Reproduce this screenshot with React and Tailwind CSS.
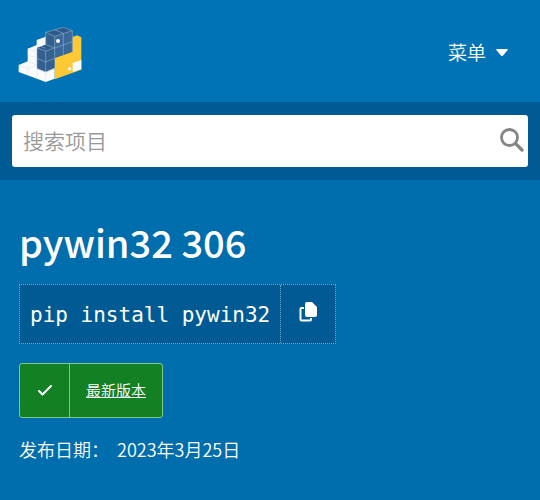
import React from 'react';

function Logo() {
  return (
    <svg viewBox="24 36 195 168" className="h-14 w-[65px]" aria-hidden="true">
      <path d="M26 150 53 139V101L80 90V75L107 65 134 75V191L107 201 26 171Z" fill="#f8fafc" />
      <path d="M188 66 201 61 214 67V164L134 193V120Z" fill="#fdc935" />
      <path d="M188 144 214 135V162L188 171Z" fill="#f8fafc" />
      <path d="M107 52 160 37 187 47V110L134 129V160L107 171 81 161V99L107 89Z" fill="#34608f" />
      <path d="M107 52 160 37 187 47 134 64ZM81 99 107 89 134 99 107 108Z" fill="#2d5a87" />
      <path d="M134 64 187 47V110L134 129Z" fill="#3a689a" />
      <g fill="none" stroke="#8fb3cf" strokeWidth="1.8">
        <path d="M107 52 134 64 187 47M134 44 160 55V119M134 64V129M107 52V89L134 99 187 80M107 52 160 37 187 47V110M81 99 107 108 134 99M107 108V171M81 130 107 141 134 130M81 99V161L107 171 134 160" />
      </g>
      <g fill="none" stroke="#d5dbe1" strokeWidth="1.2">
        <path d="M26 150 53 160 81 150M53 139 81 150M53 160V181M81 161V191M81 161 107 171 134 160M107 171V201M53 119 81 130M53 101 81 111M80 90 107 100" />
      </g>
      <path d="M161 119V181M134 160 214 131" fill="none" stroke="#f0c43c" strokeWidth="1" />
      <circle cx="144" cy="78" r="6" fill="#f8fafc" />
      <circle cx="179" cy="161" r="5" fill="#f8fafc" />
    </svg>
  );
}

function SearchIcon() {
  return (
    <svg viewBox="0 0 24 24" className="size-6" fill="none" stroke="#858585" aria-hidden="true">
      <circle cx="9.500" cy="9.500" r="8" strokeWidth="2.800" />
      <path d="m15.500 15.500 6.500 6.500" strokeWidth="3.200" strokeLinecap="round" />
    </svg>
  );
}

function CopyIcon() {
  return (
    <svg viewBox="0 0 18 20" className="h-5 w-[18px]" aria-hidden="true">
      <path d="M8 0h5l5 5v8a2 2 0 0 1-2 2H8a2 2 0 0 1-2-2V2a2 2 0 0 1 2-2Z" fill="#fff" />
      <path d="M5 6H2.500a1 1 0 0 0-1 1v10.500a1 1 0 0 0 1 1H11a1 1 0 0 0 1-1V16" fill="none" stroke="#fff" strokeWidth="2" />
    </svg>
  );
}

export default function App() {
  return (
    <div className="min-h-screen bg-[#006dad] font-['Noto_Sans_CJK_SC',sans-serif] text-white">
      <header className="flex h-[102px] items-center justify-between bg-[#0073b7] pr-8 pl-[18px]">
        <a href="#" aria-label="PyPI" className="mt-2">
          <Logo />
        </a>
        <button type="button" className="mt-0.5 flex items-center gap-2.5 text-[19px] leading-7 font-[350]">
          菜单
          <svg viewBox="0 0 12 7" className="h-[7px] w-3" fill="#fff" aria-hidden="true">
            <path d="M1 0h10q1.500 0 .5 1.200L7 6.500q-1 1-2 0L.5 1.200Q-.5 0 1 0Z" />
          </svg>
        </button>
      </header>

      <form role="search" className="bg-[#005b95] px-3 py-[13px]">
        <div className="flex h-[52px] items-center rounded-[3px] bg-white pr-1 pb-0.5 pl-[11px]">
          <input
            type="search"
            aria-label="搜索项目"
            placeholder="搜索项目"
            className="min-w-0 flex-1 bg-transparent text-[21px] leading-8 font-[350] text-gray-800 outline-none placeholder:text-[#999]"
          />
          <button type="submit" aria-label="搜索">
            <SearchIcon />
          </button>
        </div>
      </form>

      <main className="flex flex-col items-start px-[19px] pt-9">
        <h1 className="text-[38px] leading-[52px] font-medium">pywin32 306</h1>

        <div className="mt-4 flex h-[60px] border border-dotted border-[#6fa9d0] bg-[#005b95]">
          <code className="flex items-center px-2.5 pt-0.5 font-['DejaVu_Sans_Mono',monospace] text-[21px] leading-8">
            pip install pywin32
          </code>
          <button
            type="button"
            aria-label="复制"
            className="flex w-[55px] items-center justify-center border-l border-dotted border-[#6fa9d0] pb-1"
          >
            <CopyIcon />
          </button>
        </div>

        <a
          href="#"
          className="mt-[19px] flex h-[55px] items-stretch rounded-[3px] border border-[#7cc987] bg-[#148024] text-[15px] font-[350]"
        >
          <span className="flex w-[50px] items-center justify-center border-r border-[#7cc987]">
            <svg viewBox="0 0 14 11" className="h-[11px] w-3.5" fill="none" stroke="#fff" strokeWidth="2" strokeLinecap="round" strokeLinejoin="round" aria-hidden="true">
              <path d="m1 6 3.500 3.500L13 1" />
            </svg>
          </span>
          <span className="flex items-center px-4 underline">最新版本</span>
        </a>

        <p className="mt-[17px] flex gap-2 text-[18px] leading-7 font-[350]">
          <span>发布日期：</span>
          <time dateTime="2023-03-25">2023年3月25日</time>
        </p>
      </main>
    </div>
  );
}
